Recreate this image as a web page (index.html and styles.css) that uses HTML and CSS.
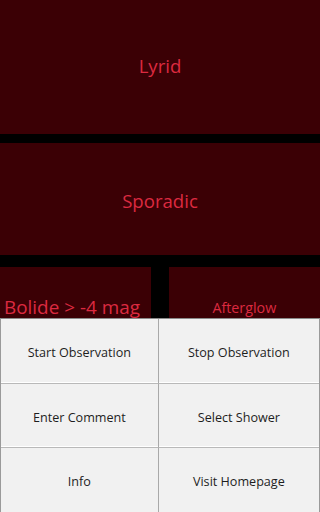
FILE: index.html
```html
<!DOCTYPE html>
<html>
<head>
<meta charset="utf-8">
<link rel="stylesheet" href="styles.css">
</head>
<body>
<div class="screen">
  <div class="tile tile-lyrid"><span class="label label-big">Lyrid</span></div>
  <div class="tile tile-sporadic"><span class="label label-big">Sporadic</span></div>
  <div class="row">
    <div class="tile tile-left"><span class="label label-bolide">Bolide &gt; -4 mag</span></div>
    <div class="tile tile-right"><span class="label label-small">Afterglow</span></div>
  </div>
  <div class="menu">
    <div class="item">Start Observation</div>
    <div class="item">Stop Observation</div>
    <div class="item">Enter Comment</div>
    <div class="item">Select Shower</div>
    <div class="item">Info</div>
    <div class="item">Visit Homepage</div>
  </div>
</div>
</body>
</html>
```
FILE: styles.css
```css
html, body {
  margin: 0;
  padding: 0;
  background: #000;
}
.screen {
  position: relative;
  width: 100%;
  height: 512px;
  overflow: hidden;
  background: #000;
  font-family: "Open Sans", "DejaVu Sans", sans-serif;
  display: flex;
  flex-direction: column;
}
.tile {
  background: #3b0005;
  display: flex;
  align-items: center;
  justify-content: center;
  box-sizing: border-box;
}
.label {
  color: #dc2a40;
  white-space: nowrap;
}
.label-big { font-size: 18.6px; }
.label-bolide { font-size: 18.9px; }
.label-small { font-size: 14.3px; }
.tile-lyrid {
  height: 134px;
  padding-bottom: 4px;
}
.tile-sporadic {
  margin-top: 9px;
  height: 112px;
  padding-top: 3px;
}
.row {
  margin-top: 12px;
  display: flex;
  gap: 5.5%;
  height: 80px;
}
.tile-left {
  width: 47.2%;
  justify-content: flex-start;
  padding-left: 4px;
}
.tile-right {
  flex: 1;
}
.menu {
  position: absolute;
  left: 0;
  right: 0;
  top: 318px;
  height: 194px;
  box-sizing: border-box;
  background: #f1f1f1;
  border-top: 1px solid #8a8a8a;
  border-left: 1px solid #9a9a9a;
  border-right: 1px solid #9a9a9a;
  display: grid;
  grid-template-columns: 49.6% 1fr;
  grid-template-rows: 65px 64px 1fr;
}
.item {
  display: flex;
  align-items: center;
  justify-content: center;
  padding-top: 3px;
  box-sizing: border-box;
  font-size: 12.6px;
  color: #1e1e1e;
  border-bottom: 1px solid #b9b9b9;
  box-shadow: inset 0 -1px 0 #ffffff;
}
.item:nth-child(odd) {
  border-right: 1px solid #a9a9a9;
}
.item:nth-child(n+5) {
  border-bottom: none;
  box-shadow: none;
}
```
